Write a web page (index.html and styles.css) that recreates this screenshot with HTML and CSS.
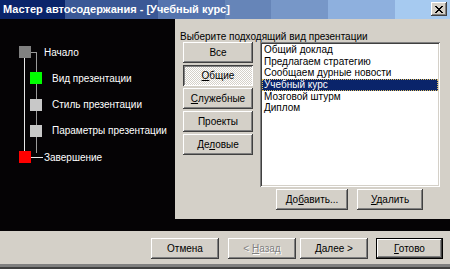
FILE: index.html
```html
<!DOCTYPE html>
<html lang="ru">
<head>
<meta charset="utf-8">
<title>Мастер автосодержания</title>
<link rel="stylesheet" href="styles.css">
</head>
<body>
<div class="window">
  <div class="titlebar">
    <span class="title">Мастер автосодержания - [Учебный курс]</span>
    <span class="close"><svg width="8" height="7" viewBox="0 0 8 7" shape-rendering="crispEdges"><path d="M0 0h2v1h1v1h2v-1h1v-1h2v1h-1v1h-1v1h-1v1h1v1h1v1h1v1h-2v-1h-1v-1h-2v1h-1v1h-2v-1h1v-1h1v-1h1v-1h-1v-1h-1v-1h-1z" fill="#000"/></svg></span>
  </div>
  <div class="main">
    <div class="steps">
      <svg class="lines" width="172" height="212" shape-rendering="crispEdges">
        <line x1="21.5" y1="38" x2="21.5" y2="132" stroke="#e8e8e8" stroke-width="1"/>
        <line x1="33.5" y1="33" x2="33.5" y2="134" stroke="#9a9a9a" stroke-width="1"/>
        <line x1="28" y1="33.5" x2="34" y2="33.5" stroke="#9a9a9a" stroke-width="1"/>
        <line x1="28" y1="138.5" x2="40" y2="138.5" stroke="#e8e8e8" stroke-width="1"/>
      </svg>
      <div class="step outer"><span class="sq gray"></span><span class="label">Начало</span></div>
      <div class="step inner"><span class="sq green"></span><span class="label">Вид презентации</span></div>
      <div class="step inner"><span class="sq light"></span><span class="label">Стиль презентации</span></div>
      <div class="step inner"><span class="sq light"></span><span class="label">Параметры презентации</span></div>
      <div class="step outer"><span class="sq red"></span><span class="label">Завершение</span></div>
    </div>
    <div class="panel">
      <div class="prompt">Выберите подходящий вид презентации</div>
      <div class="content">
        <div class="tabs">
          <div class="btn">Все</div>
          <div class="btn pressed"><span><u>О</u>бщие</span></div>
          <div class="btn"><span><u>С</u>лужебные</span></div>
          <div class="btn">Проекты</div>
          <div class="btn"><span>Де<u>л</u>овые</span></div>
        </div>
        <div class="listcol">
          <div class="listbox">
            <div class="item">Общий доклад</div>
            <div class="item">Предлагаем стратегию</div>
            <div class="item">Сообщаем дурные новости</div>
            <div class="item selected">Учебный курс</div>
            <div class="item">Мозговой штурм</div>
            <div class="item">Диплом</div>
          </div>
          <div class="listbtns">
            <div class="btn add"><span>До<u>б</u>авить...</span></div>
            <div class="btn del"><span><u>У</u>далить</span></div>
          </div>
        </div>
      </div>
    </div>
  </div>
  <div class="footer">
    <div class="btn fbtn">Отмена</div>
    <div class="btn fbtn back disabled"><span>&lt; <u>Н</u>азад</span></div>
    <div class="btn fbtn next"><span><u>Д</u>алее &gt;</span></div>
    <div class="btn fbtn finish default"><span><u>Г</u>отово</span></div>
  </div>
</div>
</body>
</html>
```

FILE: styles.css
```css
* { box-sizing: border-box; }
html, body {
  margin: 0;
  padding: 0;
  width: 450px;
  height: 269px;
  overflow: hidden;
  background: #d4d0c8;
  font-family: "Liberation Sans", Arial, sans-serif;
  font-size: 10px;
  color: #000;
}
.window {
  width: 450px;
  height: 269px;
  display: flex;
  flex-direction: column;
  border-bottom: 2px solid #404040;
  box-shadow: inset 0 -3px 0 #808080;
}
.titlebar {
  height: 19px;
  flex: none;
  display: flex;
  align-items: center;
  justify-content: space-between;
  padding: 0 3px 1px 3px;
  background: linear-gradient(to right,
    #0a246a 0, #0a246a 65px,
    #3a5896 65px, #3a5896 158px,
    #5574ae 158px, #5574ae 225px,
    #6685b8 225px, #6685b8 271px,
    #7797c8 271px, #7797c8 328px,
    #8eb0de 328px, #8eb0de 395px,
    #a6caf0 395px);
}
.title {
  color: #fff;
  font-weight: bold;
  font-size: 11px;
  white-space: nowrap;
}
.close {
  width: 16px;
  height: 14px;
  background: #d4d0c8;
  display: flex;
  align-items: center;
  justify-content: center;
  box-shadow: inset -1px -1px #404040, inset 1px 1px #fff, inset -2px -2px #808080;
}
.main {
  height: 212px;
  flex: none;
  display: flex;
  align-items: flex-start;
  background: #050305;
  padding-left: 3px;
}
.steps {
  position: relative;
  width: 172px;
  height: 212px;
  padding-top: 20px;
  color: #fff;
}
.lines {
  position: absolute;
  left: 0;
  top: 0;
}
.step {
  position: relative;
  height: 26.25px;
  display: flex;
  align-items: center;
  white-space: nowrap;
}
.sq {
  width: 12px;
  height: 12px;
  flex: none;
}
.outer { padding-left: 16px; }
.outer .label { margin-left: 13px; }
.inner { padding-left: 27px; }
.inner .label { margin-left: 10px; }
.gray { background: #808080; }
.green { background: #00ff00; }
.light { background: #c8c8c8; }
.red { background: #ff0000; }
.panel {
  width: 275px;
  height: 200px;
  background: #d4d0c8;
}
.prompt {
  height: 23px;
  padding: 12px 0 0 5px;
  line-height: 11px;
  white-space: nowrap;
}
.content {
  display: flex;
  padding-left: 8px;
}
.tabs {
  width: 70px;
  display: flex;
  flex-direction: column;
  gap: 2px;
}
.tabs .btn { height: 21px; }
.btn {
  background: #d4d0c8;
  display: flex;
  align-items: center;
  justify-content: center;
  white-space: nowrap;
  box-shadow: inset -1px -1px #404040, inset 1px 1px #fff, inset -2px -2px #808080;
}
.btn u { text-decoration-thickness: 1px; text-underline-offset: 1px; }
.btn.pressed {
  background: repeating-conic-gradient(#ffffff 0 25%, #d4d0c8 0 50%) 0 0 / 2px 2px;
  box-shadow: inset 1px 1px #404040, inset -1px -1px #fff, inset 2px 2px #808080;
}
.listcol {
  margin-left: 7px;
  display: flex;
  flex-direction: column;
  gap: 2px;
}
.listbox {
  width: 180px;
  height: 145px;
  background: #fff;
  padding: 2.2px 2px 2px 2px;
  box-shadow: inset 1px 1px #808080, inset -1px -1px #fff, inset 2px 2px #404040, inset -2px -2px #d4d0c8;
}
.item {
  height: 11.6px;
  line-height: 11.6px;
  padding-left: 2px;
  white-space: nowrap;
}
.item.selected {
  background: #0a246a;
  color: #fff;
  outline: 1px dotted #e0c060;
  outline-offset: -1px;
}
.listbtns {
  display: flex;
  gap: 9px;
  padding-left: 16px;
}
.listbtns .btn { height: 21px; }
.add { width: 72px; }
.del { width: 66px; }
.footer {
  flex: 1;
  display: flex;
  align-items: flex-start;
  padding: 7px 0 0 151px;
}
.fbtn {
  height: 21px;
  width: 68px;
}
.back { margin-left: 9px; }
.next { margin-left: 4px; }
.finish { margin-left: 8px; width: 67px; }
.disabled {
  color: #808080;
  text-shadow: 1px 1px 0 #fff;
}
.default {
  box-shadow: inset 0 0 0 1px #000, inset -2px -2px #404040, inset 2px 2px #fff, inset -3px -3px #808080;
}
```
